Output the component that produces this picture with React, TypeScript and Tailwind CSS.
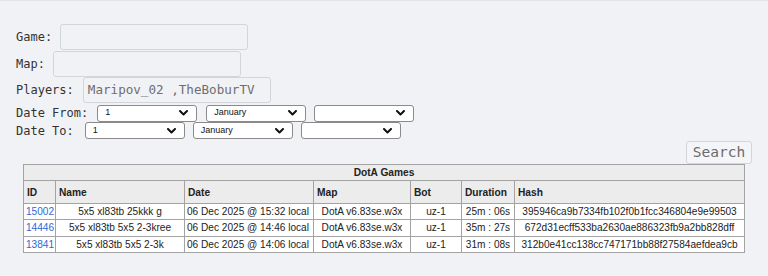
import React from "react";

const mono = { fontFamily: '"DejaVu Sans Mono", "Liberation Mono", monospace' };

function Chevron() {
  return (
    <svg width="9" height="6" viewBox="0 0 9 6" className="pointer-events-none absolute right-[8px] top-1/2 -translate-y-1/2">
      <path d="M1 1 L4.5 4.5 L8 1" fill="none" stroke="#111" strokeWidth="2" strokeLinecap="round" strokeLinejoin="round" />
    </svg>
  );
}

function Sel({ value, className = "" }: { value: string; className?: string }) {
  return (
    <div className={"relative h-[17px] w-[100px] rounded-[3px] border border-[#8a8a8a] bg-white " + className}>
      <span className="absolute left-[7px] top-1/2 -translate-y-1/2 text-[9px] text-[#111]" style={{ fontFamily: '"Liberation Sans", Arial, sans-serif' }}>
        {value}
      </span>
      <Chevron />
    </div>
  );
}

const rows = [
  { id: "15002", name: "5x5 xl83tb 25kkk g", date: "06 Dec 2025 @ 15:32 local", dur: "25m : 06s", hash: "395946ca9b7334fb102f0b1fcc346804e9e99503" },
  { id: "14446", name: "5x5 xl83tb 5x5 2-3kree", date: "06 Dec 2025 @ 14:46 local", dur: "35m : 27s", hash: "672d31ecff533ba2630ae886323fb9a2bb828dff" },
  { id: "13841", name: "5x5 xl83tb 5x5 2-3k", date: "06 Dec 2025 @ 14:06 local", dur: "31m : 08s", hash: "312b0e41cc138cc747171bb88f27584aefdea9cb" },
];

export default function App() {
  const th = "border border-[#a3a3a3] bg-[#ececec] px-[3px] text-left font-bold text-[10.2px] text-[#222]";
  const td = "border border-[#a3a3a3] bg-white px-[2px] text-[10.1px] text-[#222] whitespace-nowrap";
  return (
    <div className="h-[276px] w-[768px] overflow-hidden border-t border-[#e2e3e8] bg-[#f1f2f6]">
      <div className="pl-[16px] text-[12px] text-[#333]" style={mono}>
        <div className="mt-[23px] flex h-[26px] items-center">
          <span>Game:</span>
          <div className="ml-[8px] h-[26px] w-[188px] rounded-[3px] border border-[#d4d5da]" />
        </div>
        <div className="mt-[1px] flex h-[26px] items-center">
          <span>Map:</span>
          <div className="ml-[8px] h-[26px] w-[188px] rounded-[3px] border border-[#d4d5da]" />
        </div>
        <div className="flex h-[26px] items-center">
          <span>Players:</span>
          <div className="ml-[9px] flex h-[26px] w-[188px] items-center rounded-[3px] border border-[#d4d5da] pl-[4px] text-[12.6px] text-[#6e6e6e]">
            Maripov_02 ,TheBoburTV
          </div>
        </div>
        <div className="mt-[1px] flex h-[18px] items-center">
          <span>Date From:</span>
          <Sel value="1" className="ml-[9px]" />
          <Sel value="January" className="ml-[9px]" />
          <Sel value="" className="ml-[8px]" />
        </div>
        <div className="flex h-[17px] items-center">
          <span>Date To:</span>
          <Sel value="1" className="ml-[11px] w-[98px]" />
          <Sel value="January" className="ml-[8px]" />
          <Sel value="" className="ml-[8px]" />
        </div>
      </div>
      <div className="mt-[2px] flex justify-end pr-[16px]">
        <button className="h-[23px] w-[66px] rounded-[3px] border border-[#d4d5da] bg-[#f4f5f8] text-[14.5px] text-[#6b6b6b]" style={mono}>
          Search
        </button>
      </div>
      <div className="pl-[23px]" style={{ fontFamily: '"Liberation Sans", Arial, sans-serif' }}>
        <table className="w-[721px] table-fixed border-collapse border border-[#969696]">
          <colgroup>
            <col className="w-[32px]" />
            <col className="w-[129px]" />
            <col className="w-[129px]" />
            <col className="w-[97px]" />
            <col className="w-[51px]" />
            <col className="w-[53px]" />
            <col className="w-[230px]" />
          </colgroup>
          <thead>
            <tr className="h-[16px]">
              <th colSpan={7} className={th} style={{ textAlign: "center" }}>
                DotA Games
              </th>
            </tr>
            <tr className="h-[23px]">
              <th className={th}>ID</th>
              <th className={th}>Name</th>
              <th className={th}>Date</th>
              <th className={th}>Map</th>
              <th className={th}>Bot</th>
              <th className={th}>Duration</th>
              <th className={th}>Hash</th>
            </tr>
          </thead>
          <tbody>
            {rows.map((r) => (
              <tr key={r.id} className="h-[16px]">
                <td className={td + " px-[1px]"}>
                  <a href="#" className="text-[#2a6ad6]">{r.id}</a>
                </td>
                <td className={td + " text-center"}>{r.name}</td>
                <td className={td}>{r.date}</td>
                <td className={td + " text-center"}>DotA v6.83se.w3x</td>
                <td className={td + " text-center"}>uz-1</td>
                <td className={td + " text-center"}>{r.dur}</td>
                <td className={td + " text-center"}>{r.hash}</td>
              </tr>
            ))}
          </tbody>
        </table>
      </div>
    </div>
  );
}
